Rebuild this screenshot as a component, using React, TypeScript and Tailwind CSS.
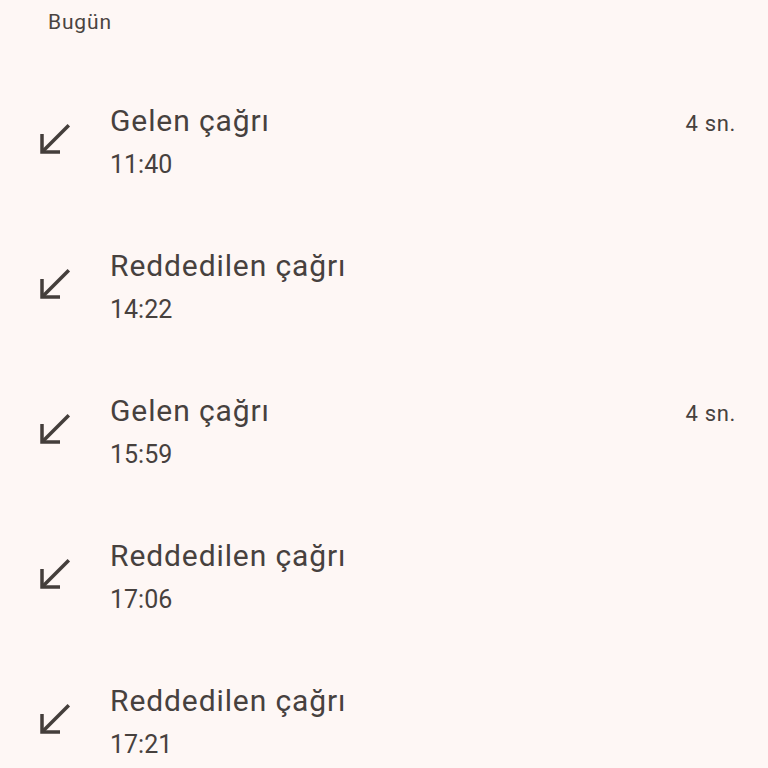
import React from 'react';

type Call = { label: string; time: string; duration?: string };

const calls: Call[] = [
  { label: 'Gelen çağrı', time: '11:40', duration: '4 sn.' },
  { label: 'Reddedilen çağrı', time: '14:22' },
  { label: 'Gelen çağrı', time: '15:59', duration: '4 sn.' },
  { label: 'Reddedilen çağrı', time: '17:06' },
  { label: 'Reddedilen çağrı', time: '17:21' },
];

function ReceivedIcon() {
  return (
    <svg viewBox="0 0 24 24" className="w-12 h-12 shrink-0" fill="none" stroke="#443e3b" strokeWidth="1.75">
      <path d="M19.4 4.6L6.4 17.6" />
      <path d="M6 9v9h9" strokeLinecap="butt" strokeLinejoin="miter" />
    </svg>
  );
}

export default function App() {
  return (
    <div className="min-h-screen w-full bg-[#fef7f5] text-[#47413e] font-['Roboto',sans-serif] overflow-hidden">
      <div className="h-[67px] pl-[48px] pt-[8px]">
        <span className="text-[21px] leading-[28px] tracking-[0.04em] text-[#4a4441]">Bugün</span>
      </div>

      {calls.map((call, idx) => (
        <div key={idx} className="h-[145px] flex items-start">
          <div className="ml-[30px] mt-[49px]">
            <ReceivedIcon />
          </div>
          <div className="ml-[32px] pt-[34px] flex-1 min-w-0">
            <div className="text-[30px] leading-[40px] tracking-[0.03em]">{call.label}</div>
            <div className="mt-[7px] text-[25px] leading-[34px]">{call.time}</div>
          </div>
          {call.duration && (
            <div className="mr-[32px] pt-[42px] text-[22px] leading-[30px] tracking-[0.03em]">{call.duration}</div>
          )}
        </div>
      ))}
    </div>
  );
}
